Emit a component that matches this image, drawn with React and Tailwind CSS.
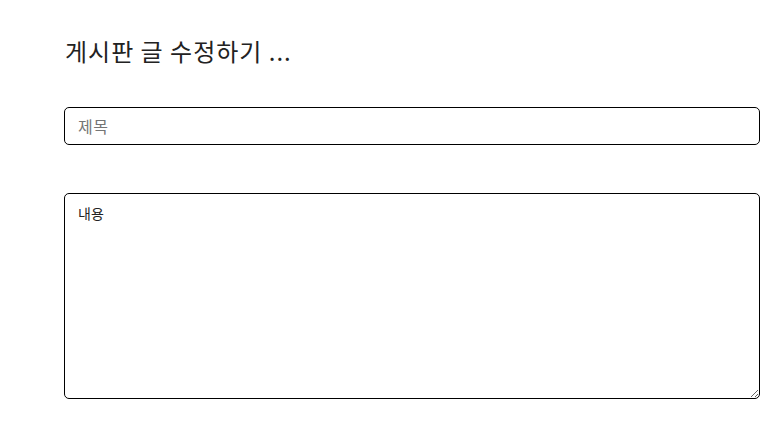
import React from "react";

export default function App() {
  return (
    <div
      className="min-h-[421px] bg-white pl-[64px] pr-[18px] pt-[35px]"
      style={{ fontFamily: '"Noto Sans CJK KR", "Noto Sans", sans-serif' }}
    >
      <h1 className="text-[24px] leading-[32px] font-normal tracking-[1px] text-[#222] pl-[1px]">게시판 글 수정하기 ...</h1>

      <input
        type="text"
        placeholder="제목"
        className="mt-[40px] block h-[38px] w-full rounded-[5px] border border-black px-[13px] text-[16px] tracking-[0.5px] text-[#222] placeholder:text-[#757575] outline-none"
      />

      <textarea
        defaultValue="내용"
        className="mt-[48px] block h-[206px] w-full rounded-[5px] border border-black px-[13px] py-[9px] text-[14px] leading-[20px] text-[#222] outline-none"
      />
    </div>
  );
}
